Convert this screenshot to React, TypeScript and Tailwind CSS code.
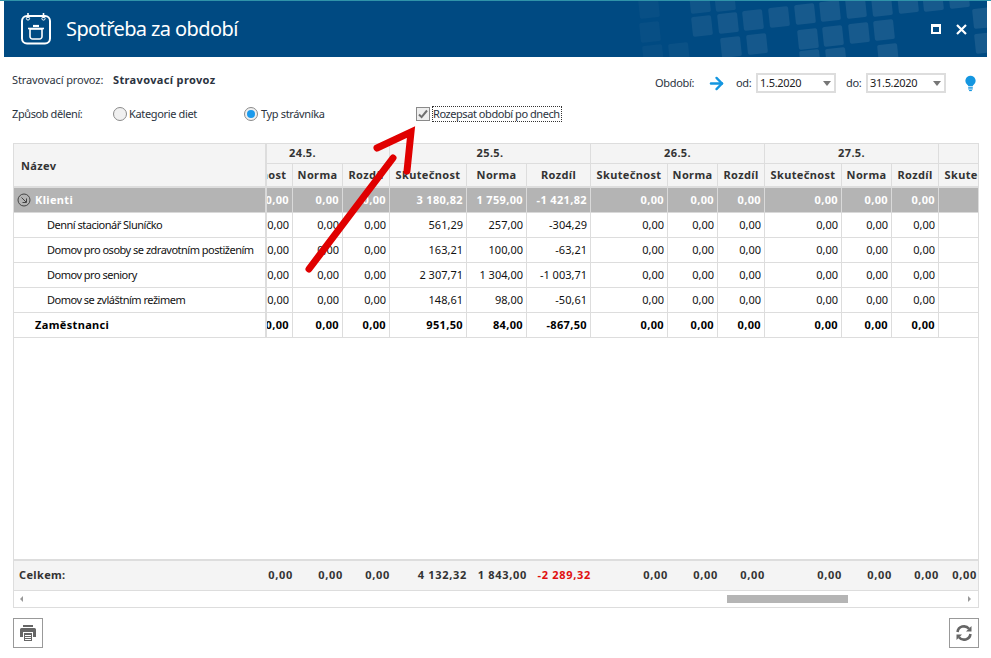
import { ReactNode } from "react";
import { ArrowRight } from "lucide-react";

const squares = [
  [649, 8, 0.35], [650, 32, 0.35], [700, 3, 0.7], [725, 1, 0.7], [702, 26, 0.8], [728, 23, 0.9],
  [753, 20, 0.9], [779, 17, 0.9], [805, 14, 1], [830, 11, 1], [856, 8, 1], [882, 6, 1], [908, 3, 1],
  [933, 1, 1], [959, -2, 1], [983, 18, 1], [985, 43, 1], [808, 39, 1], [833, 36, 1], [859, 33, 1],
  [884, 30, 1], [731, 47, 0.9], [757, 44, 0.9], [653, 55, 0.35], [679, 53, 0.45], [888, 54, 1],
  [836, 58, 1], [810, 60, 1],
];

const groups = [
  { label: "24.5.", w: "w-[174px]" },
  { label: "25.5.", w: "w-[201px]" },
  { label: "26.5.", w: "w-[174px]" },
  { label: "27.5.", w: "w-[174px]" },
  { label: "", w: "w-[174px]" },
];

const colW = [
  "w-[77px]", "w-[50px]", "w-[47px]",
  "w-[77px]", "w-[60px]", "w-[64px]",
  "w-[77px]", "w-[50px]", "w-[47px]",
  "w-[77px]", "w-[50px]", "w-[47px]",
  "w-[77px]",
];
const colNames = [
  "Skutečnost", "Norma", "Rozdíl",
  "Skutečnost", "Norma", "Rozdíl",
  "Skutečnost", "Norma", "Rozdíl",
  "Skutečnost", "Norma", "Rozdíl",
  "Skutečnost",
];

const z = "0,00";
const rows = [
  { name: "Klienti", kind: "group", vals: [z, z, z, "3 180,82", "1 759,00", "-1 421,82", z, z, z, z, z, z] },
  { name: "Denní stacionář Sluníčko", kind: "item", vals: [z, z, z, "561,29", "257,00", "-304,29", z, z, z, z, z, z] },
  { name: "Domov pro osoby se zdravotním postižením", kind: "item", vals: [z, z, z, "163,21", "100,00", "-63,21", z, z, z, z, z, z] },
  { name: "Domov pro seniory", kind: "item", vals: [z, z, z, "2 307,71", "1 304,00", "-1 003,71", z, z, z, z, z, z] },
  { name: "Domov se zvláštním režimem", kind: "item", vals: [z, z, z, "148,61", "98,00", "-50,61", z, z, z, z, z, z] },
  { name: "Zaměstnanci", kind: "total", vals: [z, z, z, "951,50", "84,00", "-867,50", z, z, z, z, z, z] },
];
const footer = [z, z, z, "4 132,32", "1 843,00", "-2 289,32", z, z, z, z, z, z];

const rowStyle = (kind: string) =>
  kind === "group"
    ? "bg-[#b4b4b4] text-white font-bold tracking-[0.35px] border-[#d9d9d9]"
    : kind === "total"
      ? "text-black font-bold tracking-[0.35px] border-[#dddddd]"
      : "text-[#111111] border-[#dddddd]";

const Radio = ({ checked, label }: { checked?: boolean; label: string }) => (
  <label className={`flex items-center tracking-[-0.35px] ${checked ? "gap-[3px]" : "gap-[2px]"}`}>
    <span className="w-[14px] h-[14px] rounded-full border border-[#8a8a8a] bg-[#f0f0f0] flex items-center justify-center">
      {checked && <span className="w-[8px] h-[8px] rounded-full bg-[#1b9aec]" />}
    </span>
    <span>{label}</span>
  </label>
);

const DateSelect = ({ value }: { value: string }) => (
  <div className="w-[80px] h-[20px] border-2 border-[#dddddd] flex items-center justify-between pl-[2px] pr-[3px] text-[#222222] tracking-[-0.3px]">
    <span>{value}</span>
    <span className="w-0 h-0 border-l-[4px] border-r-[4px] border-t-[5px] border-l-transparent border-r-transparent border-t-[#777777]" />
  </div>
);

const IconButton = ({ children }: { children: ReactNode }) => (
  <button className="w-[30px] h-[30px] border border-[#999999] flex items-center justify-center">{children}</button>
);

export default function App() {
  return (
    <div
      className="relative w-[991px] h-[658px] overflow-hidden bg-white text-[11px] text-[#2b3340] flex flex-col"
      style={{ fontFamily: '"Noto Sans", sans-serif' }}
    >
      <div className="h-px bg-[#2f93a9]" />

      {/* title bar */}
      <div className="relative mx-[4px] h-[56px] bg-[#004a82] flex items-center text-white overflow-hidden">
        <svg className="absolute left-[-4px] top-[-1px]" width="991" height="57" viewBox="0 0 991 57">
          {squares.map(([x, y, o], i) => (
            <rect
              key={i}
              x={x - 10}
              y={y - 10}
              width="20"
              height="20"
              rx="2"
              fill="#ffffff"
              fillOpacity={0.09 * o}
              transform={`rotate(-6 ${x} ${y})`}
            />
          ))}
        </svg>
        <svg className="relative ml-[16px]" width="32" height="32" viewBox="0 0 32 32" fill="none" stroke="#fff">
          <rect x="2" y="3" width="28" height="27.5" rx="5" strokeWidth="2" />
          <path d="M8 0v5M23.5 0v5" strokeWidth="1.6" />
          <circle cx="8" cy="5.5" r="1.6" strokeWidth="1" />
          <circle cx="23.5" cy="5.5" r="1.6" strokeWidth="1" />
          <path d="M10 16h12v7.5a2.5 2.5 0 0 1-2.5 2.5h-7a2.5 2.5 0 0 1-2.5-2.5z" strokeWidth="1.6" />
          <path d="M8 15.5h16" strokeWidth="1.6" />
          <path d="M13 13h6" strokeWidth="2.2" />
        </svg>
        <span className="relative ml-[14px] text-[20px] tracking-[-0.6px] leading-none">Spotřeba za období</span>
        <div className="relative ml-auto mr-[20px] flex items-center gap-[15px]">
          <span className="w-[10px] h-[10px] border-2 border-t-[3px] border-white" />
          <svg width="11" height="11" viewBox="0 0 11 11" stroke="#fff" strokeWidth="2.2">
            <path d="M1 1l9 9M10 1l-9 9" />
          </svg>
        </div>
      </div>

      {/* filters */}
      <div className="h-[20px] mt-[16px] pl-[12px] flex items-center">
        <span className="w-[101px] mb-[6px] tracking-[-0.1px]">Stravovací provoz:</span>
        <span className="font-bold mb-[6px] tracking-[0.35px]">Stravovací provoz</span>
        <span className="ml-auto tracking-[-0.35px]">Období:</span>
        <ArrowRight className="ml-[13px] text-[#1496e0]" size={19} strokeWidth={3} />
        <span className="w-[20px] ml-[10px] tracking-[-0.35px]">od:</span>
        <DateSelect value="1.5.2020" />
        <span className="w-[20px] ml-[10px] tracking-[-0.35px]">do:</span>
        <DateSelect value="31.5.2020" />
        <svg className="ml-[19px] mr-[15px]" width="11" height="17" viewBox="0 0 12 17" fill="#1496e0">
          <path d="M6 0a5.5 5.5 0 0 0-3.2 10c.5.4.7.8.7 1.3h5c0-.5.2-.9.7-1.3A5.5 5.5 0 0 0 6 0z" />
          <rect x="3.5" y="12" width="5" height="1.2" />
          <rect x="3.5" y="13.8" width="5" height="1.2" />
          <rect x="4.5" y="15.6" width="3" height="1.2" />
        </svg>
      </div>
      <div className="h-[16px] mt-[13px] pl-[12px] flex items-center">
        <span className="w-[101px] tracking-[-0.4px]">Způsob dělení:</span>
        <div className="w-[131px]">
          <Radio label="Kategorie diet" />
        </div>
        <div className="w-[172px]">
          <Radio checked label="Typ strávníka" />
        </div>
        <span className="w-[14px] h-[14px] border border-[#8a8a8a] bg-[#eeeeee] flex items-center justify-center">
          <svg width="10" height="10" viewBox="0 0 10 10" fill="none" stroke="#6f6f6f" strokeWidth="2">
            <path d="M1 5.5l2.6 2.6L9 1.5" />
          </svg>
        </span>
        <span className="ml-[2px] pr-px h-[16px] leading-[14px] border border-dotted border-[#333333] tracking-[-0.44px] whitespace-nowrap">
          Rozepsat období po dnech
        </span>
      </div>

      {/* table */}
      <div className="ml-[13px] mt-[21px] w-[966px] h-[465px] border border-[#dddddd] flex flex-col">
        <div className="flex-1 min-h-0 flex">
          <div className="w-[253px] flex flex-col shrink-0">
            <div className="h-[44px] bg-[#f4f4f4] border-r-2 border-b-2 border-[#dddddd] pl-[7px] flex items-center font-bold tracking-[0.35px] text-[#333333]">
              <span className="mt-[2px]">Název</span>
            </div>
            {rows.map((r) => (
              <div
                key={r.name}
                className={`h-[25px] border-b border-r-2 flex items-center whitespace-nowrap ${rowStyle(r.kind)} ${r.kind === "item" ? "pl-[33px] tracking-[-0.5px]" : "pl-[21px]"}`}
              >
                {r.kind === "group" && (
                  <svg className="-ml-[18px] mr-[4px]" width="14" height="14" viewBox="0 0 14 14" fill="none" stroke="#444444">
                    <circle cx="7" cy="7" r="6" />
                    <path d="M4.5 4.5l4.5 4.5M9.5 5.5v4h-4" />
                  </svg>
                )}
                <span>{r.name}</span>
              </div>
            ))}
            <div className="flex-1" />
            <div className="h-[32px] border-t-2 border-b border-[#dddddd] bg-[#f4f4f4] pl-[5px] flex items-center font-bold tracking-[0.35px] text-[#333333]">
              Celkem:
            </div>
          </div>

          <div className="flex-1 min-w-0 overflow-hidden flex flex-col">
            <div className="-ml-[51px] flex flex-col flex-1 w-[1000px]">
              <div className="flex h-[20px] bg-[#f4f4f4] font-bold tracking-[0.35px] text-[#333333]">
                {groups.map((g) => (
                  <div key={g.label} className={`${g.w} shrink-0 border-r border-b border-[#dddddd] flex items-center justify-center`}>
                    {g.label}
                  </div>
                ))}
              </div>
              <div className="flex h-[24px] bg-[#f4f4f4] font-bold tracking-[0.35px] text-[#333333]">
                {colNames.map((n, i) => (
                  <div key={i} className={`${colW[i]} shrink-0 border-r border-b-2 border-[#dddddd] flex items-center justify-center`}>
                    {n}
                  </div>
                ))}
              </div>
              {rows.map((r) => (
                <div key={r.name} className={`flex h-[25px] ${r.kind === "group" ? "bg-[#b4b4b4]" : ""}`}>
                  {colW.map((w, i) => (
                    <div
                      key={i}
                      className={`${w} shrink-0 border-r border-b flex items-center justify-end pr-[3px] ${rowStyle(r.kind)}`}
                    >
                      {r.vals[i]}
                    </div>
                  ))}
                </div>
              ))}
              <div className="flex-1" />
              <div className="flex h-[32px] border-t-2 border-b border-[#dddddd] bg-[#f4f4f4] font-bold tracking-[0.7px] text-[#333333]">
                {footer.map((v, i) => (
                  <div key={i} className={`${colW[i]} shrink-0 flex items-center justify-end ${v === "-2 289,32" ? "text-[#e01010]" : ""}`}>
                    {v}
                  </div>
                ))}
                <div className="w-[38px] shrink-0 flex items-center justify-end">{z}</div>
              </div>
            </div>
          </div>
        </div>

        {/* scrollbar */}
        <div className="h-[16px] flex items-center pl-[6px] pr-[7px]">
          <span className="w-0 h-0 border-y-[3px] border-r-[3px] border-y-transparent border-r-[#999999]" />
          <span className="ml-[704px] w-[121px] h-[8px] bg-[#b5b5b5]" />
          <span className="ml-auto w-0 h-0 border-y-[3px] border-l-[3px] border-y-transparent border-l-[#999999]" />
        </div>
      </div>

      {/* bottom buttons */}
      <div className="mt-[10px] mx-[13px] w-[966px] flex justify-between">
        <IconButton>
          <svg width="16" height="16" viewBox="0 0 16 16" fill="#666666">
            <rect x="3" y="0" width="10" height="2" />
            <path d="M1.5 3h13A1.5 1.5 0 0 1 16 4.5V12h-3V7H3v5H0V4.5A1.5 1.5 0 0 1 1.5 3z" />
            <path d="M4 8h8v8H4zM5 10v1h6v-1zM5 12v1h6v-1zM5 14v1h6v-1z" fillRule="evenodd" />
          </svg>
        </IconButton>
        <IconButton>
          <svg width="16" height="16" viewBox="0 0 16 16" fill="none" stroke="#666666" strokeWidth="2.6">
            <path d="M1.5 7A6.5 6.5 0 0 1 13 3.8" />
            <path d="M14.5 9A6.5 6.5 0 0 1 3 12.2" />
            <path d="M15.5 1v5.5H10L15.5 1z" fill="#666666" stroke="none" />
            <path d="M.5 15V9.5H6L.5 15z" fill="#666666" stroke="none" />
          </svg>
        </IconButton>
      </div>

      {/* red annotation arrow */}
      <svg className="absolute inset-0 pointer-events-none" width="991" height="658" viewBox="0 0 991 658" fill="none" stroke="#e00000" strokeWidth="7" strokeLinecap="round">
        <path d="M309 269L393 158" />
        <path d="M377 148L411 132L407 171" strokeLinejoin="miter" />
      </svg>
    </div>
  );
}
